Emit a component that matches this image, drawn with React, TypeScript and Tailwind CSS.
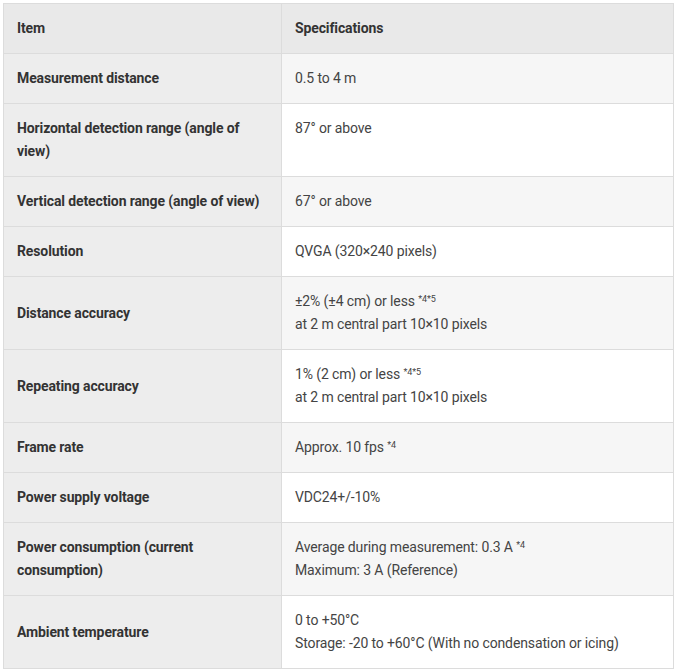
const rows: { item: string; spec: React.ReactNode }[] = [
  { item: "Measurement distance", spec: "0.5 to 4 m" },
  { item: "Horizontal detection range (angle of view)", spec: "87° or above" },
  { item: "Vertical detection range (angle of view)", spec: "67° or above" },
  { item: "Resolution", spec: "QVGA (320×240 pixels)" },
  {
    item: "Distance accuracy",
    spec: (
      <>
        ±2% (±4 cm) or less <sup className="text-[9px]">*4*5</sup>
        <br />
        at 2 m central part 10×10 pixels
      </>
    ),
  },
  {
    item: "Repeating accuracy",
    spec: (
      <>
        1% (2 cm) or less <sup className="text-[9px]">*4*5</sup>
        <br />
        at 2 m central part 10×10 pixels
      </>
    ),
  },
  {
    item: "Frame rate",
    spec: (
      <>
        Approx. 10 fps <sup className="text-[9px]">*4</sup>
      </>
    ),
  },
  { item: "Power supply voltage", spec: "VDC24+/-10%" },
  {
    item: "Power consumption (current consumption)",
    spec: (
      <>
        Average during measurement: 0.3 A <sup className="text-[9px]">*4</sup>
        <br />
        Maximum: 3 A (Reference)
      </>
    ),
  },
  {
    item: "Ambient temperature",
    spec: (
      <>
        0 to +50°C
        <br />
        Storage: -20 to +60°C (With no condensation or icing)
      </>
    ),
  },
]

export default function App() {
  return (
    <div className="bg-white p-[3px] font-['Roboto',sans-serif] text-[14px] leading-[23px] tracking-[-0.12px]">
      <table className="w-[671px] border-collapse">
        <thead>
          <tr className="bg-[#e9e9e9]">
            <th className="w-[278px] border border-[#dcdcdc] px-[13px] py-[13px] text-left font-bold text-[#333]">
              Item
            </th>
            <th className="border border-[#dcdcdc] px-[13px] py-[13px] text-left font-bold text-[#333]">
              Specifications
            </th>
          </tr>
        </thead>
        <tbody>
          {rows.map((row, i) => (
            <tr key={i}>
              <td className="border border-[#dcdcdc] bg-[#ededed] px-[13px] py-[13px] align-middle font-bold text-[#333]">
                {row.item}
              </td>
              <td
                className={`border border-[#dcdcdc] px-[13px] py-[13px] align-top text-[#444] ${
                  i % 2 === 0 ? "bg-[#f6f6f6]" : "bg-white"
                }`}
              >
                {row.spec}
              </td>
            </tr>
          ))}
        </tbody>
      </table>
    </div>
  )
}
